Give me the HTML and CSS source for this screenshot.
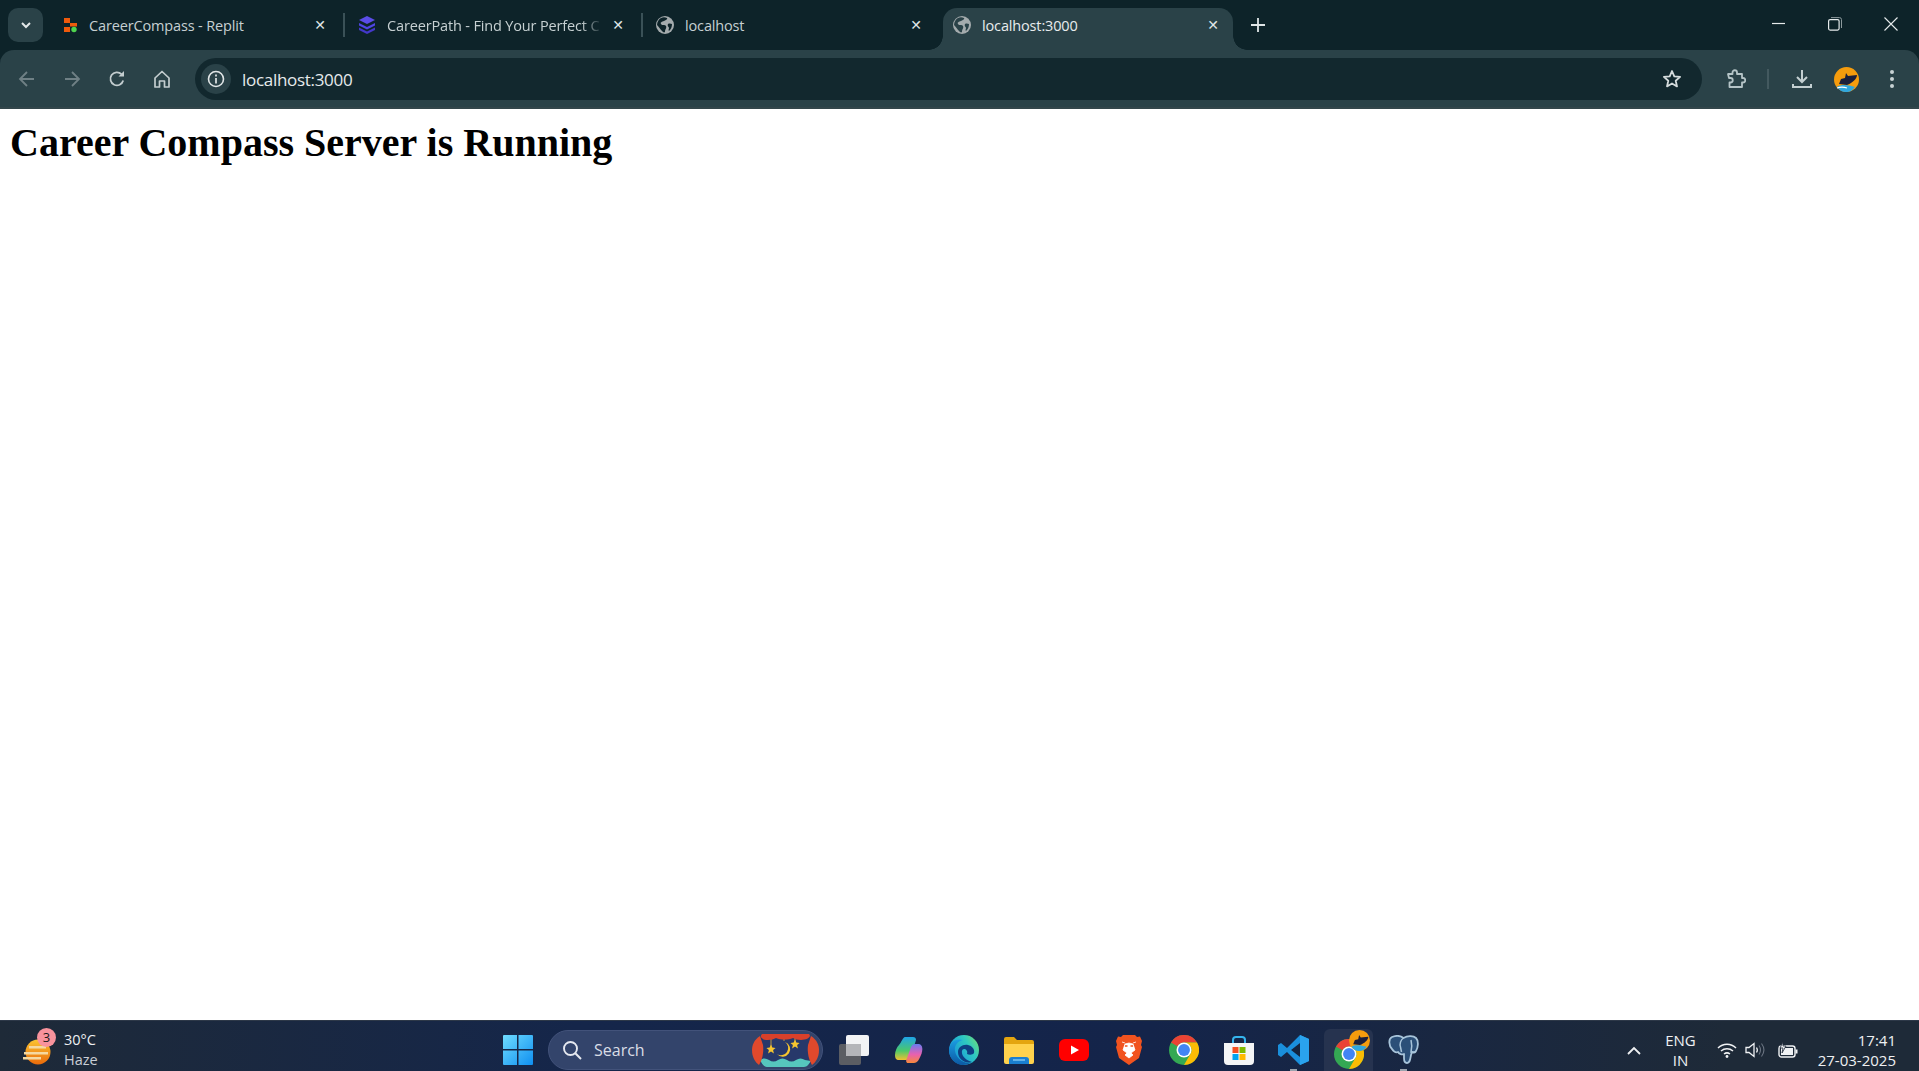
FILE: index.html
```html
<!DOCTYPE html>
<html lang="en">
<head>
    <meta charset="UTF-8">
    <meta name="viewport" content="width=device-width, initial-scale=1.0">
    <title>localhost:3000</title>
    <link rel="stylesheet" href="styles.css">
</head>
<body>
    <div class="tabstrip">
        <div class="tab-search">
            <svg width="14" height="14" viewBox="0 0 14 14"><path d="M3 5l4 4 4-4" fill="none" stroke="#e3e8e9" stroke-width="2"/></svg>
        </div>
        <div class="tab">
            <svg class="favicon" viewBox="-4 -2 18 18"><path d="M0 0h6v5H0zM6 5h7v3.500H6zM0 9h6v5H0z" fill="#ef5a0c"/><circle cx="10" cy="11.500" r="2.700" fill="#4fd44f"/></svg>
            <span class="tab-title">CareerCompass - Replit</span>
            <span class="tab-close">✕</span>
        </div>
        <div class="tab-sep"></div>
        <div class="tab">
            <svg class="favicon" viewBox="0 0 18 18"><path d="M9 0l8 4-8 4-8-4z" fill="#5b4de8"/><path d="M1 7l8 4 8-4v2.500l-8 4-8-4z" fill="#4f46e5"/><path d="M1 11.500l8 4 8-4V14l-8 4-8-4z" fill="#4338ca"/></svg>
            <span class="tab-title fade">CareerPath - Find Your Perfect C</span>
            <span class="tab-close">✕</span>
        </div>
        <div class="tab-sep"></div>
        <div class="tab">
            <svg class="favicon" viewBox="0 0 18 18"><circle cx="9" cy="9" r="9" fill="#a4abad"/><path d="M5 2c2-1 4-1 6 0 1 1-1 2-3 3S4 6 5 8s4 0 5 2-1 3-1 6c-1 1-2 0-3-1-2-2-3-4-5-6 0-3 2-6 4-7zM12 8c2-1 3 0 4 0 0 3-1 5-3 7-1-1 0-2 0-3s-2-2-1-4z" fill="#0d2329"/></svg>
            <span class="tab-title">localhost</span>
            <span class="tab-close">✕</span>
        </div>
        <div class="tab tab-active">
            <svg class="favicon" viewBox="0 0 18 18"><circle cx="9" cy="9" r="9" fill="#a4abad"/><path d="M5 2c2-1 4-1 6 0 1 1-1 2-3 3S4 6 5 8s4 0 5 2-1 3-1 6c-1 1-2 0-3-1-2-2-3-4-5-6 0-3 2-6 4-7zM12 8c2-1 3 0 4 0 0 3-1 5-3 7-1-1 0-2 0-3s-2-2-1-4z" fill="#2a4248"/></svg>
            <span class="tab-title">localhost:3000</span>
            <span class="tab-close">✕</span>
        </div>
        <div class="tab-new">
            <svg width="14" height="14" viewBox="0 0 14 14"><path d="M7 0v14M0 7h14" stroke="#dfe5e6" stroke-width="1.800"/></svg>
        </div>
        <div class="window-buttons">
            <svg width="14" height="14" viewBox="0 0 14 14"><path d="M0 6.500h13" stroke="#e6ebec" stroke-width="1.200"/></svg>
            <svg width="14" height="14" viewBox="0 0 14 14"><rect x=".6" y="2.600" width="10.500" height="10.500" rx="1.500" fill="none" stroke="#e6ebec" stroke-width="1.200"/><path d="M3 .6h8.500a2 2 0 0 1 2 2V11" fill="none" stroke="#8d9a9d" stroke-width="1"/></svg>
            <svg width="14" height="14" viewBox="0 0 14 14"><path d="M.5.500l13 13M13.500.500l-13 13" stroke="#e6ebec" stroke-width="1.100"/></svg>
        </div>
    </div>

    <div class="toolbar-wrap">
        <div class="toolbar">
            <div class="nav-buttons">
                <svg width="18" height="18" viewBox="0 0 18 18"><path d="M16 9H2M9 2L2 9l7 7" fill="none" stroke="#6f8085" stroke-width="1.800"/></svg>
                <svg width="18" height="18" viewBox="0 0 18 18"><path d="M2 9h14M9 2l7 7-7 7" fill="none" stroke="#6f8085" stroke-width="1.800"/></svg>
                <svg width="18" height="18" viewBox="0 0 18 18"><path d="M15.200 10.500A6.500 6.500 0 1 1 13.500 4.200" fill="none" stroke="#c3cdcf" stroke-width="1.800"/><path d="M10.500 6.500H16V1z" fill="#c3cdcf"/></svg>
                <svg width="18" height="18" viewBox="0 0 18 18"><path d="M2 8l7-6.500L16 8v9h-4.500v-6h-5v6H2z" fill="none" stroke="#c3cdcf" stroke-width="1.700" stroke-linejoin="round"/></svg>
            </div>
            <div class="omnibox">
                <div class="info-chip">
                    <svg width="18" height="18" viewBox="0 0 18 18"><circle cx="9" cy="9" r="7.500" fill="none" stroke="#e1e6e7" stroke-width="1.600"/><path d="M9 8v5.500M9 4.500v2" stroke="#e1e6e7" stroke-width="1.700"/></svg>
                </div>
                <span class="url">localhost:3000</span>
                <svg class="star" width="20" height="20" viewBox="0 0 20 20"><path d="M10 2l2.300 5.400 5.800.5-4.400 3.800 1.300 5.700-5-3-5 3 1.300-5.700L1.900 7.900l5.800-.5z" fill="none" stroke="#d5dcdd" stroke-width="1.800" stroke-linejoin="round"/></svg>
            </div>
            <div class="toolbar-actions">
                <svg class="ext" width="20" height="20" viewBox="0 0 20 20"><path d="M2 5h4.500V3.500a2 2 0 0 1 4.500 0V5h5v4h1a2 2 0 0 1 0 4.500h-1V18H3.500v-4.500H4.500a2 2 0 0 0 0-4.500H3z" fill="none" stroke="#b5c4c7" stroke-width="1.800" stroke-linejoin="round"/></svg>
                <div class="action-sep"></div>
                <svg class="dl" width="20" height="20" viewBox="0 0 20 20"><path d="M10 1v11M5 8l5 5 5-5" fill="none" stroke="#c3cfd1" stroke-width="2"/><path d="M1 15v3h18v-3" fill="none" stroke="#c3cfd1" stroke-width="2"/></svg>
                <svg class="avatar" width="25" height="25" viewBox="0 0 25 25"><circle cx="12.500" cy="12.500" r="12.500" fill="#f59c0d"/><path d="M3 20c4-3 12-2 18 0-3 4-5 5-9 5s-7-2-9-5z" fill="#2fa6de"/><path d="M5 17l2-5 4-1 1-5 2 3 9-1c0 4-5 8-10 10z" fill="#1b1f3b"/><path d="M3 21c3-1 7-1 10 0" stroke="#fff" stroke-width="1.200" fill="none"/></svg>
                <svg class="menu" width="6" height="20" viewBox="0 0 6 20"><circle cx="3" cy="3" r="2" fill="#c8d2d4"/><circle cx="3" cy="10" r="2" fill="#c8d2d4"/><circle cx="3" cy="17" r="2" fill="#c8d2d4"/></svg>
            </div>
        </div>
    </div>

    <div class="page">
        <h1>Career Compass Server is Running</h1>
    </div>

    <div class="taskbar">
        <div class="weather">
            <div class="weather-icon">
                <svg width="28" height="26" viewBox="0 0 28 26"><defs><linearGradient id="sun" x1="0" y1="0" x2="0" y2="1"><stop offset="0" stop-color="#fbc531"/><stop offset="1" stop-color="#ea6a0a"/></linearGradient></defs><circle cx="15" cy="13" r="12.500" fill="url(#sun)"/><path d="M6 7h17v2.500H6zM1 13h24v2.500H1zM0 18h18v2.500H0z" fill="#f5d9a0"/></svg>
                <span class="badge">3</span>
            </div>
            <div class="weather-text">
                <span class="temp">30°C</span>
                <span class="cond">Haze</span>
            </div>
        </div>
        <div class="task-center">
            <div class="slot">
                <svg width="30" height="30" viewBox="0 0 30 30"><defs><linearGradient id="win" x1="0" y1="0" x2="1" y2="1"><stop offset="0" stop-color="#6fdcff"/><stop offset="1" stop-color="#0f8ff0"/></linearGradient></defs><path d="M0 1a1 1 0 0 1 1-1h13v14H0zM15.500 0H29a1 1 0 0 1 1 1v13H15.500zM0 15.500h14V30H1a1 1 0 0 1-1-1zM15.500 15.500H30V29a1 1 0 0 1-1 1H15.500z" fill="url(#win)"/></svg>
            </div>
            <div class="search-pill">
                <svg width="20" height="20" viewBox="0 0 20 20"><circle cx="8.500" cy="8.500" r="6.500" fill="none" stroke="#e6e9f0" stroke-width="1.900"/><path d="M13.300 13.300L19 19" stroke="#e6e9f0" stroke-width="2"/></svg>
                <span class="search-text">Search</span>
                <svg class="search-art" width="67" height="34" viewBox="0 0 67 34"><rect x="3" y="1" width="61" height="33" rx="15" fill="#27386a"/><path d="M8 27c3-2 6-2 9 0s6 2 9 0 6-2 9 0 6 2 9 0 6-2 9 0l6 1c-2 3-4 6-7 6H15c-3 0-5-3-7-7z" fill="#56c6bd"/><path d="M19 3v11M43 3v6M32 3v5" stroke="#e7b23a" stroke-width=".8"/><path d="M10 1h47c3 3-2 6-8 6-3 0-6-1-8-2-5 2-12 2-17 0-2 1-5 2-8 2-6 0-9-3-6-6z" fill="#d9402a"/><path d="M8 3C2 7 0 12 0 17c0 7 3 12 7 15 3-5 5-12 4-20-1-3-2-6-3-9z" fill="#e0492c"/><path d="M59 3c6 4 8 9 8 14 0 7-3 12-7 15-3-5-5-12-4-20 1-3 2-6 3-9z" fill="#e0492c"/><path d="M33 9a7.500 7.500 0 1 1-8 12 7 7 0 0 0 8-12z" fill="#f6c52f"/><path d="M19 11.500l1.300 3.100 3.300.3-2.500 2.200.8 3.300-2.900-1.800-2.900 1.800.8-3.300-2.500-2.200 3.300-.3zM43 6.500l1.300 3.100 3.300.3-2.500 2.200.8 3.300-2.900-1.800-2.900 1.800.8-3.300-2.500-2.200 3.300-.3z" fill="#f6c52f"/></svg>
            </div>
            <div class="slot">
                <svg width="30" height="30" viewBox="0 0 30 30"><rect x="0" y="9" width="22" height="21" rx="2" fill="#5b5d63"/><rect x="7" y="0" width="23" height="21" rx="2" fill="#f2f3f5"/><rect x="7" y="9" width="15" height="12" fill="#b4b5b9"/></svg>
            </div>
            <div class="slot">
                <svg width="28" height="26" viewBox="0 0 28 26"><defs><linearGradient id="cop1" x1="0" y1="0" x2="0" y2="1"><stop offset="0" stop-color="#1fa5e8"/><stop offset=".6" stop-color="#4cc96a"/><stop offset="1" stop-color="#f0c030"/></linearGradient><linearGradient id="cop2" x1="0" y1="0" x2="0" y2="1"><stop offset="0" stop-color="#6a7cf0"/><stop offset=".55" stop-color="#e860b0"/><stop offset="1" stop-color="#f7893a"/></linearGradient></defs><path d="M10 0h8c2 0 3 1 3 3l-5 16c-1 3-3 4-5 4H4c-3 0-4-2-4-5 0-4 2-8 4-10s4-8 6-8z" fill="url(#cop1)"/><path d="M12 26h7c3 0 5-3 7-8s2-10-2-11h-4c-2 0-3 1-4 3l-5 14z" fill="url(#cop2)"/></svg>
            </div>
            <div class="slot">
                <svg width="32" height="30" viewBox="0 0 32 30"><defs><linearGradient id="edge1" x1="0" y1=".6" x2="1" y2="0"><stop offset="0" stop-color="#1491e0"/><stop offset=".6" stop-color="#2fc9c0"/><stop offset="1" stop-color="#7ce06a"/></linearGradient><linearGradient id="edge2" x1="0" y1="0" x2="0" y2="1"><stop offset="0" stop-color="#1b9de2"/><stop offset="1" stop-color="#0c59a4"/></linearGradient></defs><circle cx="16" cy="15" r="15" fill="url(#edge1)"/><path d="M1 15C2 6 9 3 15 5c-5 1-9 5-8 11 1 7 9 14 17 11-3 2-6 3-9 3C7 30 1 23 1 15z" fill="url(#edge2)"/><path d="M10 17c0-5 5-8 10-7 4 1 7 4 6 8 -1 2-5 2-7 1 1-3-1-5-3-5s-3 3-1 7c2 3 5 5 9 6-7 2-14-3-14-10z" fill="#0e3f83"/></svg>
            </div>
            <div class="slot">
                <svg width="30" height="27" viewBox="0 0 30 27"><path d="M0 2a2 2 0 0 1 2-2h8l3 3h15a2 2 0 0 1 2 2v4H0z" fill="#e4a50f"/><path d="M0 7h30v18a2 2 0 0 1-2 2H2a2 2 0 0 1-2-2z" fill="#ffd24d"/><path d="M5 27v-4c0-2 1-3 3-3h14c2 0 3 1 3 3v4z" fill="#1a7fd0"/><path d="M9 23h12" stroke="#7cc4f2" stroke-width="1.500"/></svg>
            </div>
            <div class="slot">
                <svg width="30" height="22" viewBox="0 0 30 22"><rect width="30" height="22" rx="6" fill="#f00"/><path d="M12 6.500l8 4.500-8 4.500z" fill="#fff"/></svg>
            </div>
            <div class="slot">
                <svg width="26" height="30" viewBox="0 0 26 30"><path d="M7 0h12l2 2 3-.5L26 6l-1 4 1 2-3 11-10 7-10-7L0 12l1-2-1-4 2-4.500L5 2z" fill="#f1531f"/><path d="M13 23l-4-3 2-2-4-3 2-6 4-1 4 1 2 6-4 3 2 2zM6 7l3 1M20 7l-3 1" fill="#fff" stroke="#fff" stroke-width=".8"/><path d="M9 11h2.500M14.500 11H17" stroke="#f1531f" stroke-width="1.500"/></svg>
            </div>
            <div class="slot">
                <svg width="30" height="30" viewBox="0 0 48 48"><circle cx="24" cy="24" r="24" fill="#34a853"/><path d="M3.200 12A24 24 0 0 1 44.800 12H24A12 12 0 0 0 13.600 18z" fill="#ea4335"/><path d="M44.800 12A24 24 0 0 1 24 48L34.400 30A12 12 0 0 0 24 12z" fill="#fbbc04"/><circle cx="24" cy="24" r="12" fill="#fff"/><circle cx="24" cy="24" r="9.500" fill="#4285f4"/></svg>
            </div>
            <div class="slot">
                <svg width="30" height="30" viewBox="0 0 30 30"><path d="M9 8V5a3 3 0 0 1 3-3h6a3 3 0 0 1 3 3v3" fill="none" stroke="#35b5ee" stroke-width="2"/><path d="M0 8h30v18a4 4 0 0 1-4 4H4a4 4 0 0 1-4-4z" fill="#f4f5f6"/><rect x="8.500" y="12" width="6" height="6" fill="#f25022"/><rect x="15.500" y="12" width="6" height="6" fill="#7fba00"/><rect x="8.500" y="19" width="6" height="6" fill="#00a4ef"/><rect x="15.500" y="19" width="6" height="6" fill="#ffb900"/></svg>
            </div>
            <div class="slot slot-open">
                <svg width="31" height="30" viewBox="0 0 31 30"><path d="M22 0l9 4v22l-9 4-13-13-6 5-3-2V10l3-2 6 5z" fill="#1a8fdc"/><path d="M22 0l9 4v22l-9 4zM22 8l-9 7 9 7z" fill="#2aa3ee"/><path d="M22 8v14l-9-7z" fill="#14243f"/></svg>
            </div>
            <div class="slot slot-active">
                <svg width="30" height="30" viewBox="0 0 48 48"><circle cx="24" cy="24" r="24" fill="#34a853"/><path d="M3.200 12A24 24 0 0 1 44.800 12H24A12 12 0 0 0 13.600 18z" fill="#ea4335"/><path d="M44.800 12A24 24 0 0 1 24 48L34.400 30A12 12 0 0 0 24 12z" fill="#fbbc04"/><circle cx="24" cy="24" r="12" fill="#fff"/><circle cx="24" cy="24" r="9.500" fill="#4285f4"/></svg>
                <svg class="slot-avatar" width="21" height="21" viewBox="0 0 25 25"><circle cx="12.500" cy="12.500" r="12.500" fill="#f59c0d"/><path d="M3 20c4-3 12-2 18 0-3 4-5 5-9 5s-7-2-9-5z" fill="#2fa6de"/><path d="M5 17l2-5 4-1 1-5 2 3 9-1c0 4-5 8-10 10z" fill="#1b1f3b"/></svg>
            </div>
            <div class="slot slot-open">
                <svg width="31" height="30" viewBox="0 0 31 30"><path d="M4 2C9 0 13 1 15.500 3 19 1 25 0 28 3c3 3 2 10 0 13-1 2-3 2-4 1l-1 3c-1 5-1 8-4 8-2 0-3-2-3-5v-4c-2 1-5 0-6-2-2 1-4 0-6-3C1 11 0 4 4 2z" fill="#2b4f78" stroke="#a8c4da" stroke-width="1.800" stroke-linejoin="round"/><path d="M15.500 3c-3 2-4 6-3 9l1 5M23 5c1 4 1 8 0 12h4" fill="none" stroke="#a8c4da" stroke-width="1.500"/></svg>
            </div>
        </div>
        <div class="tray">
            <svg class="chevron" width="14" height="9" viewBox="0 0 14 9"><path d="M1 8l6-6 6 6" fill="none" stroke="#eef0f2" stroke-width="1.800"/></svg>
            <div class="lang"><span>ENG</span><span>IN</span></div>
            <svg class="wifi" width="20" height="16" viewBox="0 0 20 16"><path d="M1 6c5-5 13-5 18 0M4 9c3.500-3 8.500-3 12 0M7 12c2-1.500 4-1.500 6 0" fill="none" stroke="#f0f2f4" stroke-width="1.500"/><circle cx="10" cy="14.500" r="1.400" fill="#f0f2f4"/></svg>
            <svg class="volume" width="20" height="16" viewBox="0 0 20 16"><path d="M1 5.500h3L9 1.500v13l-5-4H1z" fill="none" stroke="#f0f2f4" stroke-width="1.300"/><path d="M11.500 5.500c1 1.500 1 3.500 0 5" fill="none" stroke="#f0f2f4" stroke-width="1.300"/><path d="M14 3.500c2 3 2 6 0 9M16.500 1.500c3 4 3 9 0 13" fill="none" stroke="#6a7380" stroke-width="1.100"/></svg>
            <svg class="battery" width="20" height="16" viewBox="0 0 20 16"><rect x="1" y="4" width="16" height="11" rx="2.500" fill="none" stroke="#f0f2f4" stroke-width="1.400"/><rect x="3" y="6" width="12" height="7" fill="#f0f2f4"/><rect x="17.500" y="7.500" width="2" height="4" fill="#f0f2f4"/><path d="M5 0L2 6h3l-1 5 4-7H5z" fill="#f0f2f4" stroke="#1e2a38" stroke-width=".8"/></svg>
            <div class="clock"><span>17:41</span><span>27-03-2025</span></div>
        </div>
    </div>
</body>
</html>
```
FILE: styles.css
```css
html, body {
    margin: 0;
    height: 100%;
    overflow: hidden;
}

body {
    display: flex;
    flex-direction: column;
    font-family: "Open Sans", "Noto Sans", sans-serif;
    background-color: #fff;
}

.tabstrip {
    display: flex;
    align-items: flex-end;
    height: 50px;
    flex: none;
    background-color: #0d2329;
    color: #c6d0d2;
}

.tab-search {
    display: flex;
    align-items: center;
    justify-content: center;
    width: 35px;
    height: 34px;
    margin: 0 3px 8px 8px;
    background-color: #2a4248;
    border-radius: 10px;
}

.tab {
    display: flex;
    align-items: center;
    width: 298px;
    height: 42px;
    padding: 0 15px 8px 14px;
    box-sizing: border-box;
    flex: none;
}

.favicon {
    width: 18px;
    height: 18px;
    flex: none;
    margin-right: 11px;
}

.tab-title {
    flex: 1;
    min-width: 0;
    font-size: 14.5px;
    letter-spacing: -0.15px;
    white-space: nowrap;
    overflow: hidden;
}

.tab-title.fade {
    -webkit-mask-image: linear-gradient(to right, #000 90%, transparent 100%);
    mask-image: linear-gradient(to right, #000 90%, transparent 100%);
}

.tab-close {
    width: 18px;
    margin-left: 6px;
    font-size: 14px;
    line-height: 18px;
    text-align: center;
    color: #dfe5e6;
    font-family: "DejaVu Sans", sans-serif;
}

.tab-sep {
    width: 2px;
    height: 24px;
    margin: 0 -1px 13px -1px;
    background-color: #3a5157;
    flex: none;
    position: relative;
}

.tab-active {
    position: relative;
    width: 290px;
    margin-left: 3px;
    padding: 0 11px 8px 10px;
    background-color: #2a4248;
    color: #e8eced;
    border-radius: 14px 14px 0 0;
}

.tab-active::before,
.tab-active::after {
    content: '';
    position: absolute;
    bottom: 0;
    width: 14px;
    height: 14px;
}

.tab-active::before {
    left: -14px;
    background: radial-gradient(circle at 0 0, transparent 13.5px, #2a4248 14px);
}

.tab-active::after {
    right: -14px;
    background: radial-gradient(circle at 100% 0, transparent 13.5px, #2a4248 14px);
}

.tab-new {
    display: flex;
    align-items: center;
    justify-content: center;
    width: 14px;
    height: 14px;
    margin: 0 0 18px 18px;
}

.window-buttons {
    display: flex;
    align-items: center;
    gap: 42px;
    margin: 0 21px 19px auto;
}

.toolbar-wrap {
    flex: none;
    background-color: #0d2329;
}

.toolbar {
    display: flex;
    align-items: center;
    height: 59px;
    padding-bottom: 1px;
    box-sizing: border-box;
    background-color: #2a4248;
    border-radius: 14px 14px 0 0;
    box-shadow: inset 0 -2px 0 #33464b;
}

.nav-buttons {
    display: flex;
    align-items: center;
    gap: 27px;
    padding-left: 18px;
    width: 177px;
    box-sizing: border-box;
    flex: none;
}

.omnibox {
    display: flex;
    align-items: center;
    width: 1507px;
    height: 42px;
    margin-left: 18px;
    flex: none;
    background-color: #12282e;
    border-radius: 21px;
    box-sizing: border-box;
    padding: 0 20px 0 6px;
}

.info-chip {
    display: flex;
    align-items: center;
    justify-content: center;
    width: 30px;
    height: 30px;
    border-radius: 50%;
    background-color: #2a4248;
    margin-right: 11px;
}

.url {
    font-size: 17px;
    letter-spacing: -0.3px;
    color: #e6ebec;
}

.star {
    margin-left: auto;
}

.toolbar-actions {
    display: flex;
    align-items: center;
    margin-left: 24px;
}

.action-sep {
    width: 2px;
    height: 20px;
    margin: 0 23px 0 21px;
    background-color: #43595f;
}

.avatar {
    margin-left: 22px;
}

.menu {
    margin-left: 30px;
}

.page {
    flex: 1;
    padding: 11px 10px 10px;
    background-color: #fff;
}

h1 {
    margin: 0;
    font-family: "Liberation Serif", serif;
    font-size: 40px;
    font-weight: bold;
    line-height: 46px;
    color: #000;
}

/* the bottom of the taskbar is cut off in the screen capture */
.taskbar {
    display: flex;
    align-items: flex-start;
    height: 51px;
    flex: none;
    overflow: hidden;
    background: linear-gradient(to right, #1e2a38 0%, #15264a 30%, #14244a 60%, #1e2a38 90%);
    border-top: 1px solid #2d3848;
    box-sizing: border-box;
    color: #eef0f2;
}

.weather {
    display: flex;
    align-items: center;
    width: 490px;
    height: 58px;
    padding-left: 23px;
    box-sizing: border-box;
    flex: none;
}

.weather-icon {
    position: relative;
    width: 28px;
    height: 26px;
    margin-top: 4px;
}

.badge {
    position: absolute;
    top: -11px;
    left: 14px;
    width: 19px;
    height: 19px;
    border-radius: 50%;
    background-color: #f8939d;
    color: #1a1a1a;
    font-size: 13px;
    line-height: 19px;
    text-align: center;
}

.weather-text {
    display: flex;
    flex-direction: column;
    margin-left: 13px;
    font-size: 14.5px;
    line-height: 20px;
}

.cond {
    color: #c9ced6;
}

.task-center {
    display: flex;
    align-items: center;
    height: 58px;
    flex: none;
}

.slot {
    display: flex;
    align-items: center;
    justify-content: center;
    position: relative;
    width: 55px;
    height: 58px;
}

.slot-active {
    width: 49px;
    height: 50px;
    margin: 8px 3px 0;
    align-self: flex-start;
    background-color: #26334f;
    border-radius: 6px 6px 0 0;
}

.slot-active::after {
    content: '';
    position: absolute;
    top: 44px;
    left: 16px;
    width: 17px;
    height: 2px;
    background-color: #4cc2ff;
}

.slot-open::after {
    content: '';
    position: absolute;
    top: 48px;
    left: 24px;
    width: 7px;
    height: 2px;
    background-color: #9aa3ad;
}

.slot-avatar {
    position: absolute;
    top: 1px;
    right: 3px;
}

.search-pill {
    display: flex;
    align-items: center;
    width: 275px;
    height: 40px;
    margin: 0 3px;
    padding: 0 3px 0 13px;
    box-sizing: border-box;
    background-color: #33446b;
    border: 1px solid #42527a;
    border-radius: 20px;
}

.search-text {
    margin-left: 12px;
    font-size: 16px;
    color: #d9dde6;
}

.search-art {
    margin-left: auto;
}

.tray {
    display: flex;
    align-items: center;
    height: 58px;
    margin-left: auto;
    padding-right: 23px;
}

.lang {
    display: flex;
    flex-direction: column;
    align-items: center;
    margin-left: 24px;
    font-size: 15px;
    line-height: 20px;
}

.wifi {
    margin-left: 21px;
}

.volume {
    margin-left: 8px;
}

.battery {
    margin-left: 13px;
}

.clock {
    display: flex;
    flex-direction: column;
    align-items: flex-end;
    margin-left: 20px;
    font-size: 15px;
    line-height: 20px;
}
```
